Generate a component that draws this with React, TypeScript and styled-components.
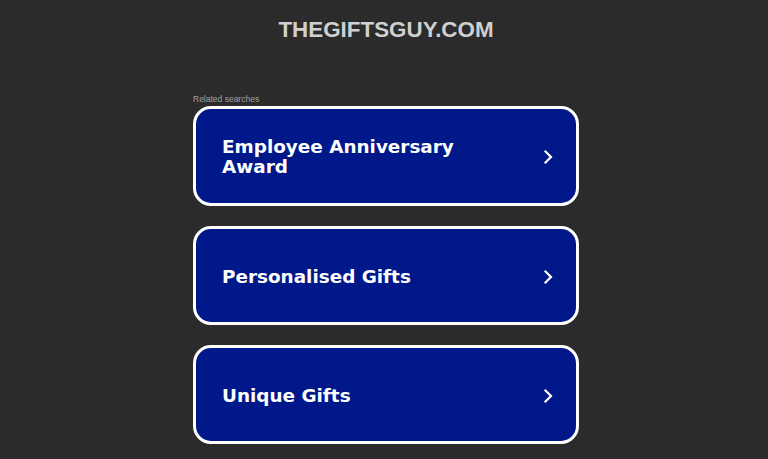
import React from "react";
import styled, { createGlobalStyle } from "styled-components";

const Global = createGlobalStyle`
  html, body { margin: 0; padding: 0; background: #2b2b2b; }
  body { font-family: "DejaVu Sans", Verdana, sans-serif; }
`;

const Page = styled.div`
  box-sizing: border-box;
  width: 768px;
  min-height: 459px;
  padding-left: 4px;
  display: flex;
  flex-direction: column;
  align-items: center;
  background: #2b2b2b;
`;

const Title = styled.h1`
  margin: 17px 0 0;
  font-family: "Liberation Sans", Arial, sans-serif;
  font-weight: 700;
  font-size: 22.4px;
  line-height: 26px;
  color: #d0d0d0;
`;

const Section = styled.div`
  width: 386px;
  margin-top: 50px;
  display: flex;
  flex-direction: column;
`;

const Label = styled.div`
  font-family: "Liberation Sans", Arial, sans-serif;
  font-size: 8.5px;
  line-height: 10px;
  color: #a0a0a0;
  margin-top: 1px;
  margin-bottom: 2px;
`;

const List = styled.div`
  display: flex;
  flex-direction: column;
  gap: 20px;
`;

const Card = styled.a`
  box-sizing: border-box;
  min-height: 99px;
  display: flex;
  align-items: center;
  justify-content: space-between;
  padding: 28px 22px 26px 26px;
  background: #01188a;
  border: 3px solid #ffffff;
  border-radius: 18px;
  text-decoration: none;
  cursor: pointer;
`;

const CardText = styled.span`
  max-width: 270px;
  color: #ffffff;
  font-family: "DejaVu Sans", Verdana, sans-serif;
  font-weight: 700;
  font-size: 18.4px;
  line-height: 20px;
`;

const Chevron = () => (
  <svg width="12" height="16" viewBox="0 0 12 16" fill="none">
    <path d="M3.5 2.5 L9 8 L3.5 13.5" stroke="#fff" strokeWidth="2.2" strokeLinecap="square" />
  </svg>
);

const items = ["Employee Anniversary Award", "Personalised Gifts", "Unique Gifts"];

export default function App() {
  return (
    <Page>
      <Global />
      <Title>THEGIFTSGUY.COM</Title>
      <Section>
        <Label>Related searches</Label>
        <List>
          {items.map((t) => (
            <Card key={t}>
              <CardText>{t}</CardText>
              <Chevron />
            </Card>
          ))}
        </List>
      </Section>
    </Page>
  );
}
